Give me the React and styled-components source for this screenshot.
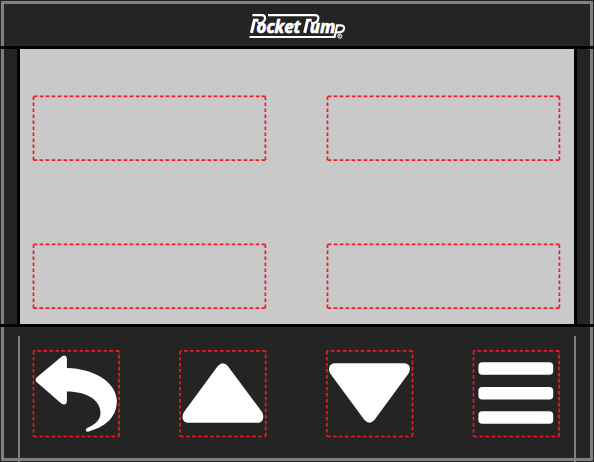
import React from 'react';
import styled, { createGlobalStyle } from 'styled-components';

const GlobalStyle = createGlobalStyle`
  body { margin: 0; background: #242424; overflow: hidden; }
  * { box-sizing: border-box; }
`;

const Device = styled.main`
  position: relative;
  width: 594px;
  height: 462px;
  display: grid;
  grid-template-rows: 46px 281px 135px;
  background: #242424;
  font-family: 'Open Sans', sans-serif;
`;

const Bezel = styled.div`
  position: absolute;
  inset: 1px 1px 1px 1px;
  border: 3px solid #808080;
  border-radius: 1px;
  pointer-events: none;
`;

const Header = styled.header`
  display: flex;
  justify-content: center;
  padding: 6px 0 0 1px;
`;

const Display = styled.section`
  position: relative;
  display: flex;
  justify-content: center;
  border-top: 3px solid #000;
  border-bottom: 3px solid #000;
`;

const Screen = styled.div`
  width: 560px;
  display: grid;
  grid-template-columns: 233px 233px;
  grid-template-rows: 65px 65px;
  column-gap: 61px;
  row-gap: 83px;
  padding: 47px 0 0 13px;
  background: #c9c9c9;
  border-left: 3px solid #000;
  border-right: 3px solid #000;
`;

const Controls = styled.nav`
  position: relative;
  display: grid;
  grid-template-columns: 147px 147px 146px 88px;
  align-content: start;
  margin: 9px 18px 0 18px;
  padding: 14px 0 0 13px;
  border: solid #808080;
  border-width: 0 2px;
`;

const Key = styled.button`
  width: 88px;
  height: 88px;
  padding: 0;
  border: 0;
  background: none;
`;

const Drawing = styled.svg`
  display: block;
  overflow: visible;
`;

const BrandText = styled.text`
  font: italic 700 18px 'Open Sans', sans-serif;
  fill: #fff;
  stroke: #fff;
  stroke-width: 0.7px;
`;

function DashedFrame({ x = 0.5, y = 0.4, w, h }) {
  return (
    <g
      transform={`translate(${x} ${y})`}
      fill="none"
      stroke="#ed1c24"
      strokeWidth="1.7"
      strokeDasharray="3.7 2.3"
    >
      <path d={`M0 0V${h}`} />
      <path d={`M0 ${h}H${w}`} />
      <path d={`M${w} ${h}V0`} />
      <path d={`M${w} 0H0`} />
    </g>
  );
}

function Field() {
  return <Drawing width="233" height="65"><DashedFrame w={231.9} h={63.7} /></Drawing>;
}

function ControlKey({ label, frameX = 0.5, children }) {
  return (
    <Key aria-label={label}>
      <Drawing width="88" height="88">
        <DashedFrame x={frameX} y={0.9} w={85.6} h={85.6} />
        {children}
      </Drawing>
    </Key>
  );
}

function Logo() {
  return (
    <Drawing width="115" height="40" viewBox="0 0 115 40" role="img" aria-label="Pocket Pump">
      <g fill="none" stroke="#fff" strokeWidth="2.2">
        <path d="M12.3 9.1H21.5Q25.6 9.1 24.9 13Q24.1 17 19.5 17H17.5" />
        <path d="M28 9.1H74.5Q79 9.1 78.3 13Q77.5 17 73 17H71" />
        <path d="M9.5 31H94.6L97.2 19.3H100.5Q104.6 19.3 104 22.8Q103.3 26.3 99 26.3H96.5" />
      </g>
      <g fill="none" stroke="#fff" strokeWidth="3.1">
        <path d="M11.5 26.8L14.4 14.2H18.5" />
        <path d="M64.7 26.8L67.6 14.2H71.7" />
      </g>
      <BrandText x="16.5" y="26.5" textLength="44" lengthAdjust="spacingAndGlyphs">ocket</BrandText>
      <BrandText x="69.8" y="26.5" textLength="25.6" lengthAdjust="spacingAndGlyphs">um</BrandText>
      <circle cx="99.8" cy="30.2" r="2.1" fill="none" stroke="#fff" strokeWidth=".9" />
      <path d="M99.1 31.5V29H100Q100.8 29.7 99.8 30.2L100.6 31.5" fill="none" stroke="#fff" strokeWidth=".7" />
    </Drawing>
  );
}

export default function App() {
  return (
    <>
      <GlobalStyle />
      <Device>
        <Bezel />
        <Header><Logo /></Header>
        <Display>
          <Screen><Field /><Field /><Field /><Field /></Screen>
        </Display>
        <Controls>
          <ControlKey label="Back">
            <path fill="#fff" d="M3.3 27.8Q1.8 29.8 3.3 31.8L28 53.2Q33 56.5 33.9 51.2V41.4C54 41.4 67.8 50.5 67.5 63C67.3 70.5 62 74.5 54 78Q52 79.5 53.2 81.3Q55 82.3 58.5 80.5C73.5 76 84 66 83.9 50.5C83 32 61 18.5 33.9 17.9V8.2Q32.8 3.7 28.8 6.4Z" />
          </ControlKey>
          <ControlKey label="Up" frameX={0.1}>
            <path fill="#fff" d="M37.8 16Q42.8 10.3 47.8 16L82 62C84.8 67 82.8 72.7 77.8 72.7H8.2C2.8 72.7 1 67 4 62Z" />
          </ControlKey>
          <ControlKey label="Down" frameX={-0.1}>
            <path fill="#fff" d="M7.7 13.2H77.2C82.5 13.2 84.5 18.5 81.5 23.5L47.6 69.8Q42.5 75.6 37.3 69.8L3.2 23.5C.5 18.5 2.5 13.2 7.7 13.2Z" />
          </ControlKey>
          <ControlKey label="Menu">
            {[12.2, 37, 61.3].map((y) => <rect key={y} x="5.4" y={y} width="74.8" height="12.5" rx="3.8" fill="#fff" />)}
          </ControlKey>
        </Controls>
      </Device>
    </>
  );
}
